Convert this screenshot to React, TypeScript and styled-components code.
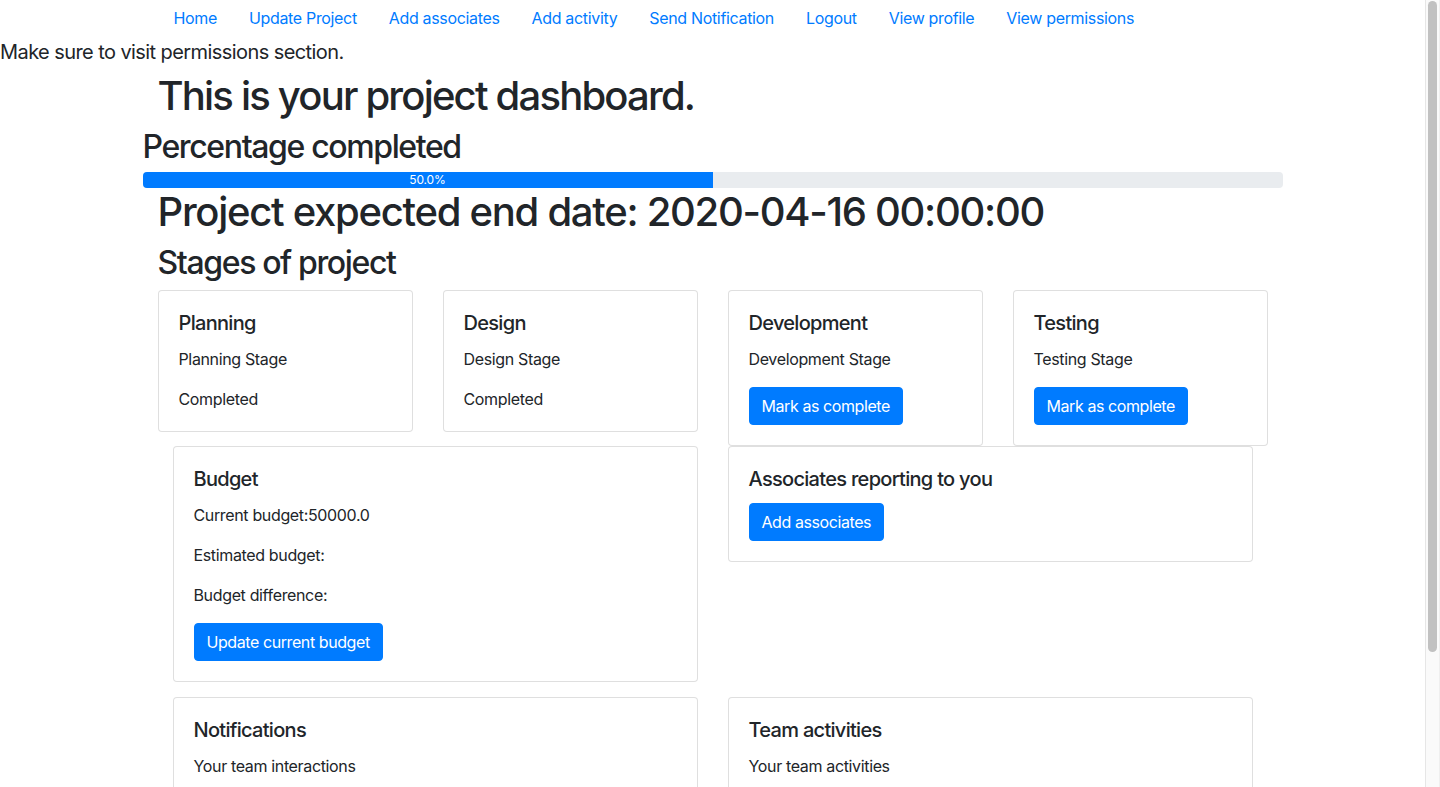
import React from "react";
import styled, { createGlobalStyle } from "styled-components";

const GlobalStyle = createGlobalStyle`
  *, *::before, *::after { box-sizing: border-box; }
  html, body { margin: 0; padding: 0; }
  body {
    padding-right: 15px;
    font-family: Inter, "Liberation Sans", Arial, sans-serif;
    font-size: 16px;
    line-height: 1.5;
    color: #212529;
    background: #fff;
  }
`;

const ScrollTrack = styled.div`
  position: fixed;
  top: 0;
  right: 0;
  width: 15px;
  height: 100vh;
  background: #fafafa;
  border-left: 1px solid #e6e6e6;
  border-right: 1px solid #efefef;
  z-index: 10;
`;

const ScrollThumb = styled.div`
  position: absolute;
  top: 1px;
  left: 2px;
  width: 9px;
  height: 651px;
  background: #c1c1c1;
  border-radius: 5px;
`;

const Container = styled.div`
  width: 100%;
  max-width: 1140px;
  margin: 0 auto;
  padding: 0 15px;
`;

const NavList = styled.ul`
  display: flex;
  flex-wrap: wrap;
  list-style: none;
  margin: 0;
  padding: 0;
`;

const NavLink = styled.a`
  display: block;
  padding: 6px 16px 10px;
  color: #007bff;
  text-decoration: none;
  letter-spacing: -0.021em;
`;

const Notice = styled.p`
  margin: 0 0 8px;
  font-size: 20px;
  line-height: 1.2;
  letter-spacing: -0.029em;
`;

const Title = styled.h1<{ $tracking: number }>`
  margin: 0 0 8px;
  font-size: 40px;
  font-weight: 500;
  line-height: 1.2;
  letter-spacing: ${(p) => p.$tracking}em;
`;

const SubTitle = styled.h2`
  margin: 0 0 7px;
  font-size: 32px;
  font-weight: 500;
  line-height: 1.2;
  letter-spacing: -0.043em;
`;

const FullRow = styled.div`
  margin: 0 -15px;
`;

const ProgressHeading = styled(SubTitle)`
  margin-bottom: 6px;
`;

const Progress = styled.div`
  display: flex;
  height: 16px;
  overflow: hidden;
  font-size: 12px;
  line-height: 16px;
  background: #e9ecef;
  border-radius: 4px;
`;

const ProgressBar = styled.div`
  display: flex;
  justify-content: center;
  color: #fff;
  background: #007bff;
  white-space: nowrap;
  letter-spacing: -0.01em;
`;

const StageRow = styled.div`
  display: grid;
  grid-template-columns: repeat(4, 1fr);
  align-items: start;
  margin: 0 -15px;
`;

const PanelRow = styled.div<{ $spaced?: boolean }>`
  display: grid;
  grid-template-columns: repeat(2, 1fr);
  align-items: start;
  margin-top: ${(p) => (p.$spaced ? "15px" : "0")};
`;

const Col = styled.div`
  padding: 0 15px;
  min-width: 0;
`;

const Card = styled.div`
  background: #fff;
  border: 1px solid rgba(0, 0, 0, 0.125);
  border-radius: 4px;
  padding: 20px;
`;

const CardTitle = styled.h5`
  margin: 0 0 12px;
  font-size: 20px;
  font-weight: 500;
  line-height: 1.2;
  letter-spacing: -0.035em;
`;

const CardText = styled.p`
  margin: 0 0 16px;
  letter-spacing: -0.022em;
  &:last-child { margin-bottom: 0; }
`;

const Button = styled.button`
  display: inline-block;
  padding: 6px 12px;
  font-family: inherit;
  font-size: 16px;
  line-height: 1.5;
  letter-spacing: -0.026em;
  color: #fff;
  background: #007bff;
  border: 1px solid #007bff;
  border-radius: 4px;
  cursor: pointer;
`;

const PageEnd = styled.div`
  height: 90px;
`;

const navItems = [
  "Home",
  "Update Project",
  "Add associates",
  "Add activity",
  "Send Notification",
  "Logout",
  "View profile",
  "View permissions",
];

type Stage = { name: string; done: boolean };
const stages: Stage[] = [
  { name: "Planning", done: true },
  { name: "Design", done: true },
  { name: "Development", done: false },
  { name: "Testing", done: false },
];

const percent = 50.0;

export default function App() {
  return (
    <>
      <GlobalStyle />
      <ScrollTrack>
        <ScrollThumb />
      </ScrollTrack>
      <Container>
        <NavList>
          {navItems.map((item) => (
            <li key={item}>
              <NavLink href="#">{item}</NavLink>
            </li>
          ))}
        </NavList>
      </Container>
      <Notice>Make sure to visit permissions section.</Notice>
      <Container>
        <Title $tracking={-0.045}>This is your project dashboard.</Title>
        <FullRow>
          <ProgressHeading>Percentage completed</ProgressHeading>
          <Progress>
            <ProgressBar style={{ width: `${percent}%` }}>{percent.toFixed(1)}%</ProgressBar>
          </Progress>
        </FullRow>
        <Title $tracking={-0.032}>Project expected end date: 2020-04-16 00:00:00</Title>
        <SubTitle>Stages of project</SubTitle>
        <StageRow>
          {stages.map((s) => (
            <Col key={s.name}>
              <Card>
                <CardTitle>{s.name}</CardTitle>
                <CardText>{s.name} Stage</CardText>
                {s.done ? <CardText>Completed</CardText> : <Button>Mark as complete</Button>}
              </Card>
            </Col>
          ))}
        </StageRow>
        <PanelRow>
          <Col>
            <Card>
              <CardTitle>Budget</CardTitle>
              <CardText>Current budget:50000.0</CardText>
              <CardText>Estimated budget:</CardText>
              <CardText>Budget difference:</CardText>
              <Button>Update current budget</Button>
            </Card>
          </Col>
          <Col>
            <Card>
              <CardTitle>Associates reporting to you</CardTitle>
              <Button>Add associates</Button>
            </Card>
          </Col>
        </PanelRow>
        <PanelRow $spaced>
          <Col>
            <Card>
              <CardTitle>Notifications</CardTitle>
              <CardText>Your team interactions</CardText>
              <Button>View notifications</Button>
            </Card>
          </Col>
          <Col>
            <Card>
              <CardTitle>Team activities</CardTitle>
              <CardText>Your team activities</CardText>
              <Button>Add activity</Button>
            </Card>
          </Col>
        </PanelRow>
        <PageEnd />
      </Container>
    </>
  );
}
